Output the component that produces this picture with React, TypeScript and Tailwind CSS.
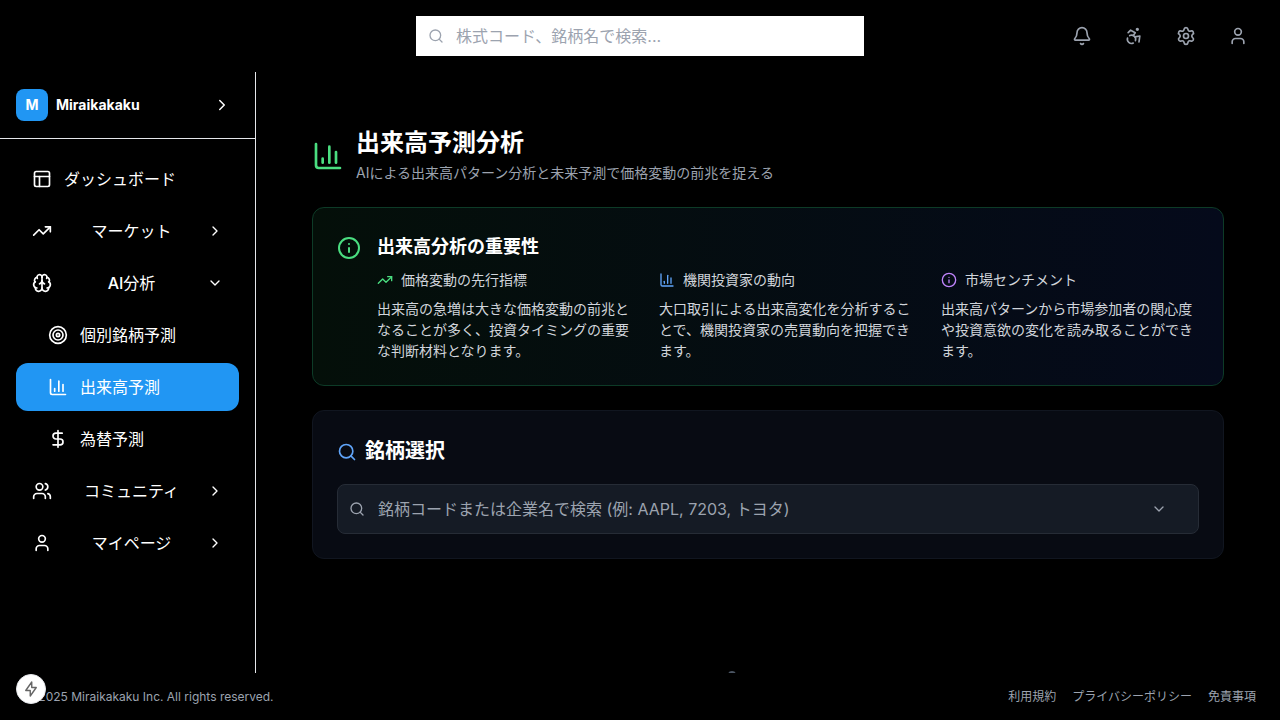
import { useState, type ReactNode } from "react";
import {
  Accessibility,
  Bell,
  Brain,
  ChartColumn,
  ChevronDown,
  ChevronRight,
  DollarSign,
  Info,
  PanelsTopLeft,
  Search,
  Settings,
  Target,
  TrendingUp,
  User,
  Users,
  type LucideIcon,
} from "lucide-react";

function IconButton({ icon: Icon, label }: { icon: LucideIcon; label: string }) {
  return (
    <button type="button" aria-label={label} className="p-2 text-[#9ca3af]">
      <Icon size={20} />
    </button>
  );
}

function Header() {
  return (
    <header className="grid h-[72px] shrink-0 grid-cols-[1fr_minmax(0,448px)_1fr] items-center px-6">
      <div />
      <label className="flex h-10 items-center gap-3 bg-white px-3 text-[#9ca3af]">
        <Search size={16} className="shrink-0" />
        <input
          type="search"
          aria-label="銘柄検索"
          placeholder="株式コード、銘柄名で検索..."
          className="min-w-0 flex-1 bg-transparent text-base text-gray-900 outline-none placeholder:text-[#9ca3af]"
        />
      </label>
      <div className="flex items-center justify-end gap-4">
        <IconButton icon={Bell} label="通知" />
        <IconButton icon={Accessibility} label="アクセシビリティ" />
        <IconButton icon={Settings} label="設定" />
        <IconButton icon={User} label="アカウント" />
      </div>
    </header>
  );
}

function NavLink({
  icon: Icon,
  children,
  nested = false,
  active = false,
}: {
  icon: LucideIcon;
  children: ReactNode;
  nested?: boolean;
  active?: boolean;
}) {
  return (
    <a
      href="#"
      aria-current={active ? "page" : undefined}
      className={`flex h-12 items-center gap-3 rounded-xl pr-4 ${nested ? "pl-8" : "pl-4"} ${active ? "bg-[#2196f3]" : ""}`}
    >
      <Icon size={20} />
      <span>{children}</span>
    </a>
  );
}

function NavGroup({
  icon: Icon,
  label,
  defaultOpen = false,
  children,
}: {
  icon: LucideIcon;
  label: ReactNode;
  defaultOpen?: boolean;
  children?: ReactNode;
}) {
  const [open, setOpen] = useState(defaultOpen);
  const Chevron = open ? ChevronDown : ChevronRight;
  return (
    <>
      <button
        type="button"
        aria-expanded={open}
        onClick={() => setOpen(!open)}
        className="flex h-12 items-center rounded-xl px-4"
      >
        <Icon size={20} className="mr-3" />
        <span className="flex-1 text-center">{label}</span>
        <Chevron size={16} className="ml-2" />
      </button>
      {open && children}
    </>
  );
}

function Sidebar() {
  return (
    <aside className="w-64 shrink-0 overflow-hidden border-r border-gray-200">
      <div className="flex items-center gap-2 border-b border-gray-200 p-4">
        <span className="flex size-8 items-center justify-center rounded-lg bg-[#2196f3] text-sm font-bold">M</span>
        <span className="flex-1 text-sm font-bold">Miraikakaku</span>
        <button type="button" aria-label="サイドバーを切り替え" className="p-2">
          <ChevronRight size={18} />
        </button>
      </div>
      <nav className="flex flex-col gap-1 p-4 text-base">
        <NavLink icon={PanelsTopLeft}>ダッシュボード</NavLink>
        <NavGroup icon={TrendingUp} label="マーケット" />
        <NavGroup icon={Brain} label={<><span className="font-medium">AI</span>分析</>} defaultOpen>
          <NavLink icon={Target} nested>個別銘柄予測</NavLink>
          <NavLink icon={ChartColumn} nested active>出来高予測</NavLink>
          <NavLink icon={DollarSign} nested>為替予測</NavLink>
        </NavGroup>
        <NavGroup icon={Users} label="コミュニティ" />
        <NavGroup icon={User} label="マイページ" />
      </nav>
    </aside>
  );
}

const points = [
  {
    icon: TrendingUp,
    tone: "text-[#4ade80]",
    title: "価格変動の先行指標",
    body: "出来高の急増は大きな価格変動の前兆となることが多く、投資タイミングの重要な判断材料となります。",
  },
  {
    icon: ChartColumn,
    tone: "text-[#60a5fa]",
    title: "機関投資家の動向",
    body: "大口取引による出来高変化を分析することで、機関投資家の売買動向を把握できます。",
  },
  {
    icon: Info,
    tone: "text-[#c084fc]",
    title: "市場センチメント",
    body: "出来高パターンから市場参加者の関心度や投資意欲の変化を読み取ることができます。",
  },
];

function Importance() {
  return (
    <section className="flex gap-4 rounded-xl border border-[#0d3b27] bg-linear-to-r/srgb from-[#040f09] to-[#050a1b] p-6">
      <Info size={24} className="mt-1 shrink-0 text-[#4ade80]" />
      <div className="flex-1">
        <h2 className="mb-2 text-lg leading-[29px] font-semibold">出来高分析の重要性</h2>
        <div className="grid grid-cols-3 gap-6 text-sm leading-[21px] text-[#d1d5db]">
          {points.map(({ icon: Icon, tone, title, body }) => (
            <div key={title}>
              <h3 className="mb-2 flex items-center gap-2">
                <Icon size={16} className={tone} />
                {title}
              </h3>
              <p>{body}</p>
            </div>
          ))}
        </div>
      </div>
    </section>
  );
}

function StockPicker() {
  return (
    <section className="rounded-xl border border-[#111620] bg-[#080b13] p-6">
      <h2 className="mb-4 flex items-center gap-2 text-xl leading-[33px] font-bold">
        <Search size={20} className="text-[#60a5fa]" />
        銘柄選択
      </h2>
      <label className="flex h-[50px] items-center rounded-lg border border-[#262c36] bg-[#151b25] pr-[31px] pl-[11px] text-[#9ca3af]">
        <Search size={16} className="mr-[13px] shrink-0" />
        <input
          type="text"
          aria-label="銘柄選択"
          placeholder="銘柄コードまたは企業名で検索 (例: AAPL, 7203, トヨタ)"
          className="min-w-0 flex-1 bg-transparent text-base text-white outline-none placeholder:text-[#9ca3af]"
        />
        <ChevronDown size={16} className="shrink-0" />
      </label>
    </section>
  );
}

export default function App() {
  return (
    <div className="flex h-screen flex-col bg-black font-['Inter','Noto_Sans_CJK_JP',sans-serif] text-white">
      <Header />
      <div className="flex min-h-0 flex-1">
        <Sidebar />
        <main className="flex min-w-0 flex-1 flex-col gap-6 overflow-hidden p-14">
          <div className="flex items-center gap-3">
            <ChartColumn size={32} className="shrink-0 text-[#4ade80]" />
            <div>
              <h1 className="mb-1 text-2xl leading-[30px] font-bold">出来高予測分析</h1>
              <p className="text-sm leading-[21px] text-[#9ca3af]">
                AIによる出来高パターン分析と未来予測で価格変動の前兆を捉える
              </p>
            </div>
          </div>
          <Importance />
          <StockPicker />
          <div className="flex justify-center py-20 text-[#4b5563]">
            <ChartColumn size={96} className="shrink-0" />
          </div>
        </main>
      </div>
      <footer className="flex h-[47px] shrink-0 items-center justify-between px-6 text-xs text-[#9ca3af]">
        <p>© 2025 Miraikakaku Inc. All rights reserved.</p>
        <div className="flex gap-4">
          <a href="#">利用規約</a>
          <a href="#">プライバシーポリシー</a>
          <a href="#">免責事項</a>
        </div>
      </footer>
      <button
        type="button"
        aria-label="クイックアクション"
        className="fixed bottom-4 left-4 flex size-[30px] items-center justify-center rounded-full border border-gray-200 bg-white text-[#666666]"
      >
        <svg width="16" height="16" viewBox="0 0 16 16" fill="none" stroke="currentColor" strokeWidth="1.4" strokeLinejoin="round">
          <path d="M8.75 1v5.5h4.5L7.25 15V9.5h-4.5z" />
        </svg>
      </button>
    </div>
  );
}
